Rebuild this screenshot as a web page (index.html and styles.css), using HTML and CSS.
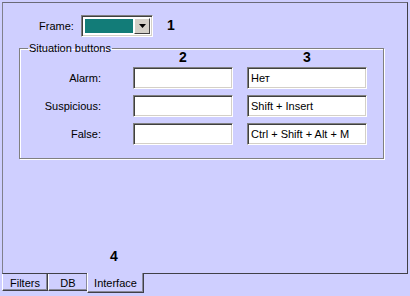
FILE: index.html
```html
<!DOCTYPE html>
<html lang="en">
  <head>
    <meta charset="UTF-8" />
    <title>Interface settings</title>
    <link rel="stylesheet" href="styles.css">
  </head>
  <body>
    <div class="window">
      <main class="page">
        <div class="frame-row">
          <span class="frame-label">Frame:</span>
          <div class="combo">
            <div class="combo-value"></div>
            <div class="combo-btn">
              <svg width="7" height="4" viewBox="0 0 7 4"><path d="M0 0h7L3.5 4z" fill="#000"/></svg>
            </div>
          </div>
          <span class="marker marker-1">1</span>
        </div>

        <fieldset class="group">
          <legend>Situation buttons</legend>
          <div class="col-markers">
            <span class="marker">2</span>
            <span class="marker">3</span>
          </div>
          <div class="hotkeys">
            <label>Alarm:</label>
            <div class="field"></div>
            <div class="field">Нет</div>

            <label>Suspicious:</label>
            <div class="field"></div>
            <div class="field">Shift + Insert</div>

            <label>False:</label>
            <div class="field"></div>
            <div class="field">Ctrl + Shift + Alt + M</div>
          </div>
        </fieldset>

        <div class="tab-marker"><span class="marker">4</span></div>
      </main>

      <nav class="tabs">
        <a class="tab tab-filters">Filters</a>
        <a class="tab tab-db">DB</a>
        <a class="tab tab-interface active">Interface</a>
      </nav>
    </div>
  </body>
</html>
```

FILE: styles.css
```css
* {
  margin: 0;
  padding: 0;
  box-sizing: border-box;
  font-family: "Liberation Sans", Arial, sans-serif;
}
body {
  background: #cfcfff;
  color: #000;
  font-size: 11px;
  width: 410px;
  height: 296px;
  overflow: hidden;
}

/* Page panel */
.window {
  padding: 2px 2px 0 2px;
}
.page {
  height: 272px;
  border-top: 1px solid #6a6a78;
  border-left: 1px solid #80808c;
  border-right: 1px solid #404048;
  border-bottom: 1px solid #404048;
  display: flex;
  flex-direction: column;
}

/* Frame row */
.frame-row {
  display: flex;
  align-items: center;
  margin-top: 12px;
  padding-left: 36px;
}
.frame-label {
  width: 42px;
}
.combo {
  width: 72px;
  height: 22px;
  display: flex;
  background: #fff;
  border-top: 1px solid #808080;
  border-left: 1px solid #808080;
  border-right: 1px solid #fff;
  border-bottom: 1px solid #fff;
  box-shadow: inset 1px 1px 0 #404040, inset -1px -1px 0 #d4d0c8;
  padding: 2px;
}
.combo-value {
  flex-grow: 1;
  background: #127c78;
  border: 1px solid #fff;
}
.combo-btn {
  width: 16px;
  background: #d4d0c8;
  border-top: 1px solid #fff;
  border-left: 1px solid #fff;
  border-right: 1px solid #404040;
  border-bottom: 1px solid #404040;
  display: flex;
  align-items: center;
  justify-content: center;
}
.marker {
  font-weight: bold;
  font-size: 14px;
  line-height: 14px;
}
.marker-1 {
  margin-left: 14px;
  margin-top: -3px;
}

/* Situation buttons group */
.group {
  margin: 5px 0 0 16px;
  width: 365px;
  border: 1px solid #808080;
  box-shadow: 1px 1px 0 #fff, inset 1px 1px 0 #fff;
  padding: 0 15px 13px 0;
}
.group legend {
  margin-left: 8px;
  padding: 0 1px;
  line-height: 13px;
}
.col-markers {
  display: grid;
  grid-template-columns: 100px 120px;
  column-gap: 14px;
  margin: -5px 0 3px 113px;
  text-align: center;
}
.hotkeys {
  display: grid;
  grid-template-columns: 99px 100px 120px;
  grid-auto-rows: 22px;
  column-gap: 14px;
  row-gap: 6px;
  align-items: center;
}
.hotkeys label {
  text-align: right;
  padding-right: 18px;
}
.field {
  height: 22px;
  background: #fff;
  border-top: 1px solid #808080;
  border-left: 1px solid #808080;
  border-right: 1px solid #fff;
  border-bottom: 1px solid #fff;
  box-shadow: inset 1px 1px 0 #404040, inset -1px -1px 0 #d4d0c8;
  padding-left: 3px;
  line-height: 20px;
  white-space: nowrap;
}

.tab-marker {
  margin-top: auto;
  margin-bottom: 10px;
  padding-left: 107px;
}

/* Tabs */
.tabs {
  display: flex;
  align-items: flex-start;
}
.tab {
  height: 17px;
  padding-top: 3px;
  line-height: 13px;
  text-align: center;
  border-left: 1px solid #fff;
  border-right: 1px solid #404048;
  border-bottom: 1px solid #404048;
  box-shadow: inset -1px -1px 0 #8a8a9a;
  cursor: default;
}
.tab-filters {
  width: 46px;
}
.tab-db {
  width: 40px;
}
.tab-interface {
  width: 57px;
}
.tab.active {
  height: 20px;
  margin-top: -1px;
  margin-left: -1px;
  padding-top: 3px;
  line-height: 15px;
  background: #cfcfff;
}
```
